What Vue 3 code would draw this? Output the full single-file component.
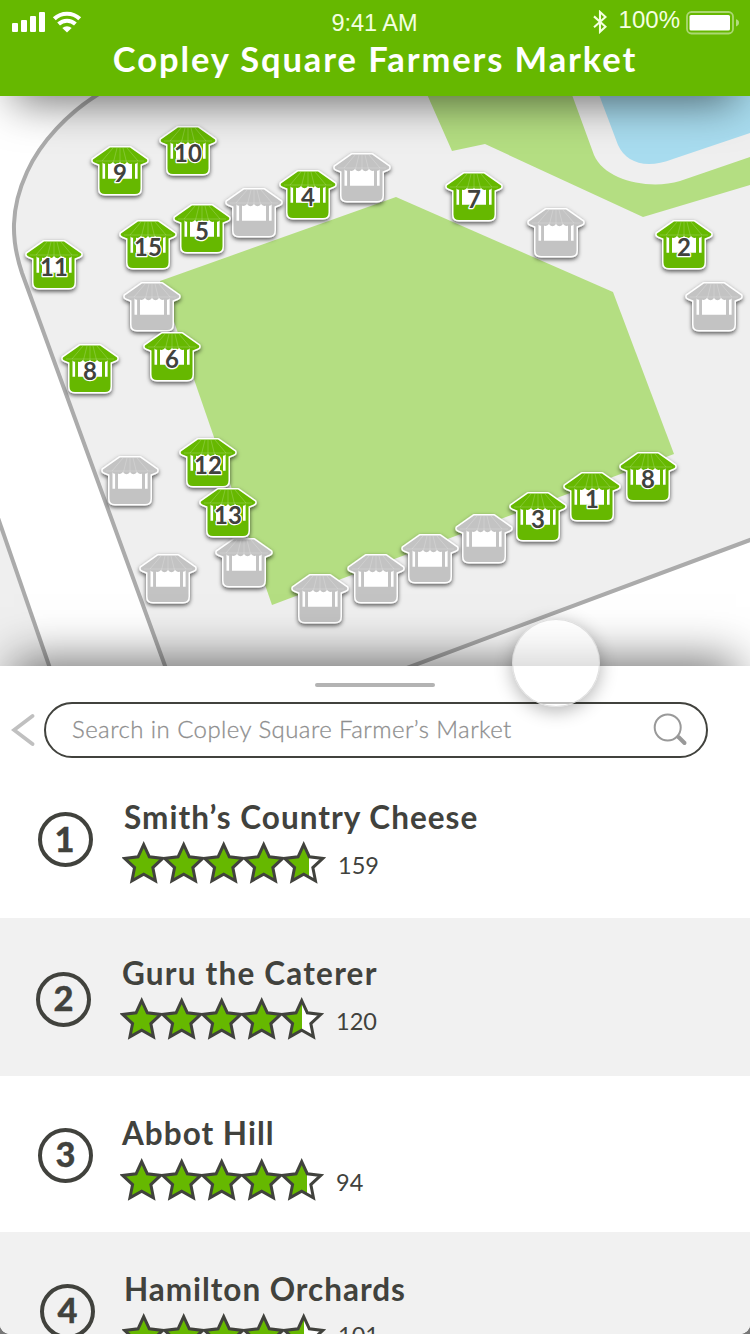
<script setup>
const stalls = [
  { x: 188, y: 126, n: '10' }, { x: 120, y: 146, n: '9' }, { x: 362, y: 153 },
  { x: 308, y: 170, n: '4' }, { x: 474, y: 172, n: '7' }, { x: 254, y: 188 },
  { x: 202, y: 204, n: '5' }, { x: 556, y: 208 }, { x: 684, y: 220, n: '2' },
  { x: 148, y: 220, n: '15' }, { x: 54, y: 240, n: '11' }, { x: 152, y: 282 },
  { x: 714, y: 282 }, { x: 172, y: 332, n: '6' }, { x: 90, y: 344, n: '8' },
  { x: 208, y: 438, n: '12' }, { x: 648, y: 452, n: '8' }, { x: 130, y: 456 },
  { x: 592, y: 472, n: '1' }, { x: 244, y: 538 }, { x: 228, y: 488, n: '13' },
  { x: 538, y: 492, n: '3' }, { x: 484, y: 514 }, { x: 430, y: 534 },
  { x: 376, y: 554 }, { x: 168, y: 554 }, { x: 320, y: 574 },
]

const vendors = [
  { rank: 1, name: 'Smith’s Country Cheese', reviews: 159, fill: 187 },
  { rank: 2, name: 'Guru the Caterer', reviews: 120, fill: 182 },
  { rank: 3, name: 'Abbot Hill', reviews: 94, fill: 187 },
  { rank: 4, name: 'Hamilton Orchards', reviews: 101, fill: 182 },
]

function starPoints(cx) {
  return Array.from({ length: 10 }, (_, i) => {
    const r = i % 2 ? 9.6 : 20
    const a = (Math.PI / 5) * i
    return `${(cx + r * Math.sin(a)).toFixed(2)},${(25.6 - r * Math.cos(a)).toFixed(2)}`
  }).join(' ')
}
const stars = [21.7, 61.7, 101.7, 141.7, 181.7].map(starPoints)
</script>

<template>
  <div class="screen">
    <header class="header">
      <div class="status">
        <div class="left">
          <svg width="72" height="24" viewBox="0 0 72 24" fill="#fff">
            <rect x="0" y="13" width="6" height="9" rx="1" />
            <rect x="9" y="10" width="6" height="12" rx="1" />
            <rect x="18" y="6" width="6" height="16" rx="1" />
            <rect x="27" y="2" width="6" height="20" rx="1" />
            <g fill="none" stroke="#fff">
              <path d="M42.300 8.800a18.500 18.500 0 0 1 25.400 0" stroke-width="4.200" />
              <path d="M46.600 14a12.300 12.300 0 0 1 16.800 0" stroke-width="4" />
            </g>
            <path d="M50.300 18a7.300 7.300 0 0 1 9.400 0L55 22.500z" />
          </svg>
        </div>
        <div class="time">9:41 AM</div>
        <div class="right">
          <svg class="bluetooth" width="14" height="24" viewBox="0 0 14 24">
            <path d="M1 6.400L12.500 16.800L7 21.800V2L12.500 7L1 17.300" fill="none" stroke="#f4ffe0" stroke-width="2.100" />
          </svg>
          <span class="percent">100%</span>
          <svg class="battery" width="54" height="24" viewBox="0 0 54 24">
            <rect x="1" y="1" width="46" height="21.500" rx="4.500" fill="none" stroke="#fff" stroke-opacity=".45" stroke-width="1.800" />
            <rect x="3.500" y="4" width="40.500" height="15.500" rx="1.600" fill="#fff" />
            <path d="M50 8.200q3 .8 3 3.600t-3 3.600z" fill="#fff" fill-opacity=".5" />
          </svg>
        </div>
      </div>
      <h1 class="title">Copley Square Farmers Market</h1>
    </header>

    <svg class="map" width="750" height="570" viewBox="0 96 750 570">
      <defs>
        <filter id="drop" x="-30%" y="-30%" width="160%" height="170%">
          <feDropShadow dx="0" dy="2" stdDeviation="2" flood-color="#000" flood-opacity=".65" />
        </filter>
        <g id="stall">
          <g filter="url(#drop)">
            <path class="rim" d="M-10 1.500H10L27 13.500Q28 15.500 25.500 16.500L20.500 18.500V42.500Q20.500 48 15 48H-15Q-20.500 48-20.500 42.500V18.500L-25.500 16.500Q-28 15.500-27 13.500Z" />
          </g>
          <path d="M-10 1.500H10L27 13.500Q28 15.500 25.500 16.500L20.500 18.500V42.500Q20.500 48 15 48H-15Q-20.500 48-20.500 42.500V18.500L-25.500 16.500Q-28 15.500-27 13.500Z" />
          <path fill="#fff" d="M-17.500 15h2.600v17.800h-2.600zM15 15h2.600v17.800h-2.600zM-12 15h24v17.800h-24z" />
          <path d="M-24 14h48v2q-3 3-6.500 .5q-2 2.500-4.500 0q-2.500 3.400-6 -.5q-3.500 4.600-7 0q-3.500 4.600-7 0q-3.500 3.900-6 .5q-2.500 2.500-4.500 0q-3.500 2.500-6.500 -.5z" />
          <path class="seams" d="M-7 2L-18 15M-3 2L-6.500 16M0 2V16M3 2L6.500 16M7 2L18 15M-24 15H24" />
        </g>
        <clipPath v-for="v in vendors" :id="'fill-' + v.rank" :key="v.rank">
          <rect x="0" y="0" :width="v.fill" height="48" />
        </clipPath>
      </defs>

      <rect x="0" y="96" width="750" height="570" fill="#efefef" />
      <path d="M-4 92H102C68 112 40 138 27 170C10 209 11 240 22 273L168 674H53L-4 516Z" fill="#fff" />
      <path d="M750 540L400 671H750Z" fill="#fff" />
      <g fill="none" stroke="#ababab" stroke-width="4">
        <path d="M102 92C68 112 40 143 27 172C10 209 11 240 22 273L168 674" />
        <path d="M-4 512L53 677" />
        <path d="M396 672L754 538.500" />
      </g>

      <g fill="#b4de82">
        <path d="M160 281L396 197L613 292L674 454L272 605Z" />
        <path d="M426 92L452 151L485 144L643 217L750 185V157L680 181C650 190 605 181 594 155L571 92Z" />
      </g>
      <path d="M598 92L618 145C626 162 645 170 673 159L750 133V92Z" fill="#a8dcef" />

      <g v-for="(s, i) in stalls" :key="i" :transform="`translate(${s.x} ${s.y})`" :class="s.n ? 'open' : 'closed'">
        <use href="#stall" />
        <text v-if="s.n" class="number" x="0" y="35.500">{{ s.n }}</text>
      </g>
    </svg>

    <main class="panel">
      <div class="handle"></div>
      <div class="search-row">
        <svg class="back" width="24" height="36" viewBox="0 0 24 36">
          <path d="M21.500 4L3 18L21.500 32" fill="none" stroke="#c0c0c0" stroke-width="3.800" stroke-linecap="round" />
        </svg>
        <div class="search">
          <span class="placeholder">Search in Copley Square Farmer’s Market</span>
          <svg width="36" height="36" viewBox="0 0 36 36" fill="none" stroke="#999">
            <circle cx="15.700" cy="15.500" r="13" stroke-width="2" />
            <path d="M26.500 25L32.500 31" stroke-width="4" stroke-linecap="round" />
          </svg>
        </div>
      </div>

      <ul class="list">
        <li v-for="v in vendors" :key="v.rank" class="vendor">
          <div class="badge"><span>{{ v.rank }}</span></div>
          <div class="info">
            <h2 class="name">{{ v.name }}</h2>
            <div class="rating">
              <svg width="204" height="48" viewBox="0 0 204 48">
                <g fill="#fff"><polygon v-for="p in stars" :key="p" :points="p" /></g>
                <g fill="#66b800" :clip-path="`url(#fill-${v.rank})`"><polygon v-for="p in stars" :key="p" :points="p" /></g>
                <g fill="none" stroke="#41423d" stroke-width="3"><polygon v-for="p in stars" :key="p" :points="p" /></g>
              </svg>
              <span class="count">{{ v.reviews }}</span>
            </div>
          </div>
        </li>
      </ul>
    </main>
    <div class="touch"></div>
  </div>
</template>

<style>
body { background: #777; }
</style>

<style scoped>
.screen {
  position: relative;
  width: 750px;
  height: 1334px;
  overflow: hidden;
  display: flex;
  flex-direction: column;
  background: #fff;
  border-radius: 0 0 10px 10px;
  font-family: Lato, "Liberation Sans", sans-serif;
  color: #41423d;
}
.header {
  position: relative;
  z-index: 1;
  flex: none;
  height: 96px;
  background: #66b800;
  box-shadow: 0 20px 44px -14px rgba(0, 0, 0, .56);
  color: #fff;
}
.status {
  display: grid;
  grid-template-columns: 1fr auto 1fr;
  height: 38px;
  padding: 0 10px 0 12px;
  font: 23.500px "Liberation Sans", sans-serif;
  color: #f4ffe0;
}
.left { padding-top: 10px; }
.time { line-height: 46px; margin-left: -3px; }
.right { display: flex; justify-content: flex-end; align-items: flex-start; }
.bluetooth { margin: 10px 12px 0 0; }
.percent { line-height: 39px; font-size: 24px; margin-right: 6px; }
.battery { margin-top: 11px; }
.title {
  margin: 0;
  font-size: 34.500px;
  line-height: 42px;
  font-weight: 700;
  text-align: center;
  letter-spacing: 1.900px;
}
.map { display: block; flex: none; }
.open { fill: #66b800; }
.closed { fill: #c3c3c3; }
.rim { stroke: #fff; stroke-width: 3; stroke-linejoin: round; }
.seams { fill: none; stroke: #fff; stroke-opacity: .28; stroke-width: .7; }
.number {
  font: 700 24px Lato, sans-serif;
  text-anchor: middle;
  fill: #41423d;
  stroke: #fff;
  stroke-width: 2.500px;
  stroke-linejoin: round;
  paint-order: stroke;
}
.panel {
  position: relative;
  z-index: 1;
  flex: none;
  box-sizing: border-box;
  height: 668px;
  padding-top: 17px;
  background: #fff;
  box-shadow: 0 -20px 44px -14px rgba(0, 0, 0, .56);
}
.handle {
  width: 120px;
  height: 4px;
  margin: 0 auto 15px;
  border-radius: 2px;
  background: #b3b3b3;
}
.search-row { display: flex; align-items: center; padding-left: 11px; }
.back { margin-right: 9px; }
.search {
  box-sizing: border-box;
  display: flex;
  align-items: center;
  justify-content: space-between;
  width: 664px;
  height: 56px;
  padding: 0 18px 0 26px;
  border: 2px solid #41423d;
  border-radius: 28px;
}
.placeholder {
  padding-bottom: 3px;
  font-size: 24px;
  font-weight: 300;
  color: #8e8e8e;
  letter-spacing: .44px;
  white-space: nowrap;
  -webkit-text-stroke: .3px #8e8e8e;
}
.list { list-style: none; margin: 4px 0 0; padding: 0; }
.vendor { display: flex; align-items: flex-start; height: 156px; }
.vendor:nth-child(even) { background: #f1f1f1; }
.vendor:nth-child(2) { height: 158px; }
.badge {
  box-sizing: border-box;
  width: 55px;
  height: 55px;
  margin: 50px 0 0 38px;
  border: 4px solid #41423d;
  border-radius: 50%;
  font-size: 34.500px;
  line-height: 45px;
  font-weight: 900;
  text-align: center;
  -webkit-text-stroke: .3px #41423d;
}
.info { margin: 36px 0 0 29px; }
.name { margin: 0 0 0 2px; font-size: 31.500px; line-height: 38px; font-weight: 700; letter-spacing: 1.020px; white-space: nowrap; }
.rating { display: flex; height: 48px; margin-top: 3px; }
.count { margin-left: 12px; font-size: 23.500px; line-height: 52px; }
.vendor:nth-child(1) .badge { text-indent: -2px; }
.vendor:nth-child(2) .badge { margin: 54px 0 0 36px; line-height: 43px; }
.vendor:nth-child(3) .badge { margin: 52px 0 0 38px; line-height: 43px; }
.vendor:nth-child(4) .badge { margin: 52px 0 0 40px; line-height: 43px; }
.vendor:nth-child(2) .name { letter-spacing: 1.200px; }
.vendor:nth-child(3) .info { margin: 38px 0 0 27px; }
.vendor:nth-child(4) .info { margin: 38px 0 0 27px; }
.vendor:nth-child(3) .rating { margin-top: 4px; }
.vendor:nth-child(4) .name { letter-spacing: .950px; }
.vendor:nth-child(4) .count { line-height: 49px; }
.touch {
  position: absolute;
  z-index: 2;
  left: 512px;
  top: 619px;
  width: 88px;
  height: 88px;
  box-sizing: border-box;
  border: 1.500px solid rgba(215, 215, 215, .8);
  border-radius: 50%;
  background: rgba(255, 255, 255, .64);
  box-shadow: 0 4px 18px rgba(0, 0, 0, .3);
}
</style>
